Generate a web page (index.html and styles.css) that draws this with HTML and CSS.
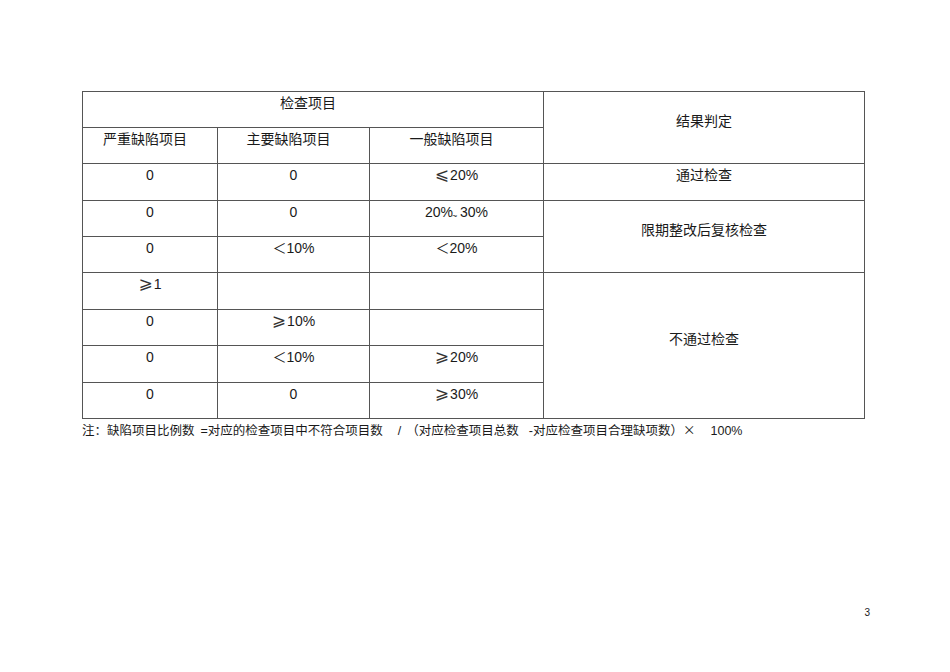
FILE: index.html
```html
<!DOCTYPE html>
<html lang="zh-CN">
<head>
<meta charset="utf-8">
<title>检查项目</title>
<link rel="stylesheet" href="styles.css">
</head>
<body>
<div class="page">
  <table class="grid">
    <colgroup>
      <col class="c1"><col class="c2"><col class="c3"><col class="c4">
    </colgroup>
    <tr class="r36">
      <td class="hd" colspan="3">检查项目</td>
      <td rowspan="2">结果判定</td>
    </tr>
    <tr class="r36">
      <td class="hd">严重缺陷项目</td>
      <td class="hd">主要缺陷项目</td>
      <td class="hd">一般缺陷项目</td>
    </tr>
    <tr class="r37">
      <td>0</td><td>0</td><td><span class="op">⩽</span>20%</td>
      <td>通过检查</td>
    </tr>
    <tr class="r36">
      <td>0</td><td>0</td><td>20%<span class="tl">~</span> 30%</td>
      <td rowspan="2">限期整改后复核检查</td>
    </tr>
    <tr class="r36">
      <td>0</td><td><span class="lt">＜</span>10%</td><td><span class="lt">＜</span>20%</td>
    </tr>
    <tr class="r37">
      <td><span class="op">⩾</span>1</td><td></td><td></td>
      <td rowspan="4">不通过检查</td>
    </tr>
    <tr class="r36">
      <td>0</td><td><span class="op">⩾</span>10%</td><td></td>
    </tr>
    <tr class="r37">
      <td>0</td><td><span class="lt">＜</span>10%</td><td><span class="op">⩾</span>20%</td>
    </tr>
    <tr class="r36">
      <td>0</td><td>0</td><td><span class="op">⩾</span>30%</td>
    </tr>
  </table>
  <p class="note">注：缺陷项目比例数<span class="g1"></span>=对应的检查项目中不符合项目数<span class="g2"></span>/<span class="g3"></span>（对应检查项目总数<span class="g4"></span>-对应检查项目合理缺项数）<span class="x">×</span><span class="g5"></span>100%</p>
  <div class="pageno">3</div>
</div>
</body>
</html>
```
FILE: styles.css
```css
html, body {
  margin: 0;
  padding: 0;
  background: #fff;
}
body {
  font-family: "Liberation Sans", "Noto Sans CJK SC", sans-serif;
  color: #1a1a1a;
}
.page {
  width: 950px;
  height: 672px;
  box-sizing: border-box;
  padding: 91px 0 0 82px;
}
.grid {
  border-collapse: collapse;
  table-layout: fixed;
  width: 782px;
  font-size: 14px;
}
.c1 { width: 135px; }
.c2 { width: 152px; }
.c3 { width: 174px; }
.c4 { width: 321px; }
.grid td {
  border: 1px solid #555;
  text-align: center;
  vertical-align: middle;
  padding: 0 0 14px 0;
  line-height: 16px;
  font-family: "Liberation Sans", "Noto Sans CJK SC", sans-serif;
}
.grid td.hd {
  padding-right: 10px;
}
.r36 { height: 36px; }
.r37 { height: 37px; }
.op {
  font-family: "DejaVu Sans", "Noto Sans CJK SC", sans-serif;
  font-size: 17px;
  line-height: 0;
  margin-right: 1px;
  color: #333;
}
.lt {
  font-family: "Noto Sans CJK SC", sans-serif;
  font-size: 14px;
  line-height: 0;
}
.tl {
  display: inline-block;
  font-size: 9px;
  width: 4px;
  margin-left: -1px;
  line-height: 0;
  transform: translateY(2px);
}
.note {
  margin: 3px 0 0 0;
  font-size: 12.5px;
  line-height: 16px;
  white-space: nowrap;
}
.x {
  font-family: "Noto Sans CJK SC", sans-serif;
}
.g1 { display: inline-block; width: 6px; }
.g2 { display: inline-block; width: 15px; }
.g3 { display: inline-block; width: 5px; }
.g4 { display: inline-block; width: 10px; }
.g5 { display: inline-block; width: 15px; }
.pageno {
  width: 788px;
  margin-top: 168px;
  text-align: right;
  font-size: 10px;
  line-height: 12px;
}
```
